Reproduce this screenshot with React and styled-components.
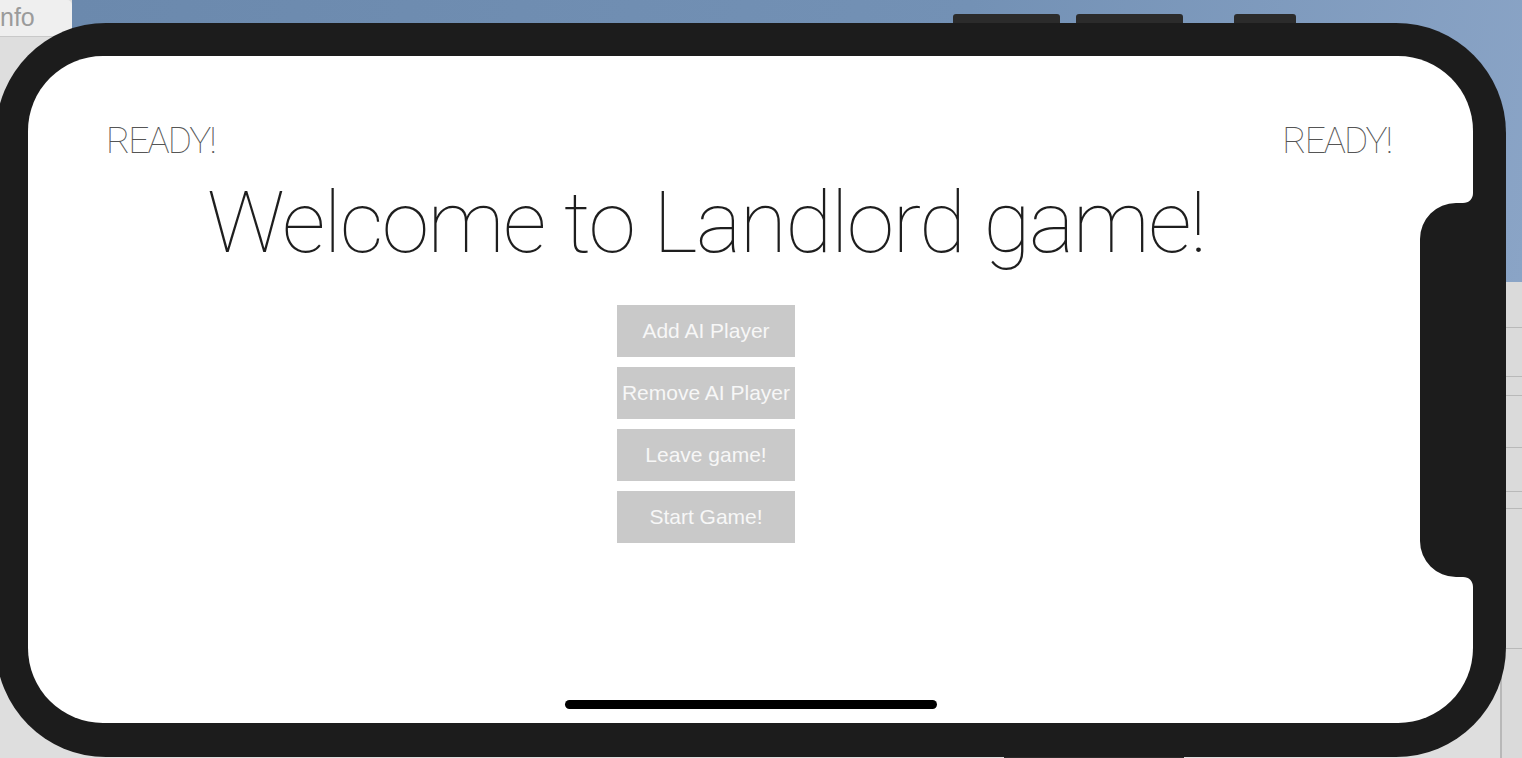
import React from "react";
import styled, { createGlobalStyle } from "styled-components";

const GlobalStyle = createGlobalStyle`
    html, body {
        margin: 0;
        padding: 0;
        overflow: hidden;
    }
    body {
        font-family: "Liberation Sans", Arial, sans-serif;
    }
`;

const Desktop = styled.div`
    position: relative;
    width: 1522px;
    height: 758px;
    overflow: hidden;
    background: #dedede;
`;

const Sky = styled.div`
    position: absolute;
    left: 72px;
    top: 0;
    right: 0;
    height: 282px;
    background: linear-gradient(100deg, #6b89ad 0%, #7391b5 60%, #8aa4c6 100%);
`;

const InfoTab = styled.div`
    position: absolute;
    left: 0;
    top: 0;
    width: 72px;
    height: 36px;
    background: #efefef;
    border-bottom: 1px solid #c9c9c9;
    border-top-right-radius: 5px;
    color: #9b9b9b;
    font-size: 25px;
    line-height: 34px;
    white-space: nowrap;
`;

const SideList = styled.div`
    position: absolute;
    left: 1500px;
    top: 282px;
    right: 0;
    bottom: 0;
    display: flex;
    flex-direction: column;
    background: #dadada;
    border-left: 2px solid #b8b8b8;
`;

const SideRow = styled.div`
    height: ${(p) => p.h}px;
    flex-shrink: 0;
    border-bottom: 1px solid #b9b9b9;
`;

const SideButton = styled.div`
    position: absolute;
    top: 14px;
    left: ${(p) => p.x}px;
    width: ${(p) => p.w}px;
    height: 14px;
    background: #2b2b2b;
    border-radius: 3px 3px 0 0;
`;

const BottomButton = styled.div`
    position: absolute;
    bottom: 0;
    left: 1004px;
    width: 180px;
    height: 4px;
    background: #2b2b2b;
`;

const Phone = styled.div`
    position: absolute;
    left: -4px;
    top: 23px;
    width: 1510px;
    height: 734px;
    box-sizing: border-box;
    padding: 33px 33px 34px 32px;
    background: #1c1c1c;
    border-radius: 110px;
    display: flex;
`;

const Screen = styled.div`
    position: relative;
    flex: 1;
    background: #ffffff;
    border-radius: 75px;
    overflow: hidden;
    display: flex;
    flex-direction: column;
`;

const Notch = styled.svg`
    position: absolute;
    right: 0;
    top: 137px;
`;

const StatusRow = styled.div`
    display: flex;
    justify-content: space-between;
    padding: 65px 82px 0 78px;
`;

const Ready = styled.div`
    font-family: Roboto, "Liberation Sans", sans-serif;
    font-weight: 100;
    font-size: 37px;
    line-height: 40px;
    letter-spacing: -1.9px;
    color: #555555;
`;

const Lobby = styled.div`
    display: flex;
    flex-direction: column;
    align-items: center;
    padding-right: 89px;
`;

const Title = styled.h1`
    margin: 7px 0 0;
    font-family: Roboto, "Liberation Sans", sans-serif;
    font-weight: 100;
    font-size: 86px;
    line-height: 110px;
    letter-spacing: -1.6px;
    color: #1e1e1e;
    white-space: nowrap;
`;

const Actions = styled.div`
    display: flex;
    flex-direction: column;
    gap: 10px;
    margin-top: 27px;
`;

const ActionButton = styled.button`
    width: 178px;
    height: 52px;
    border: none;
    padding: 0;
    background: #c9c9c9;
    color: #f7f7f7;
    font-family: "Liberation Sans", Arial, sans-serif;
    font-size: 21px;
    white-space: nowrap;
    cursor: pointer;
`;

const HomeIndicator = styled.div`
    margin: auto auto 14px;
    width: 372px;
    height: 9px;
    border-radius: 5px;
    background: #000000;
`;

const buttons = ["Add AI Player", "Remove AI Player", "Leave game!", "Start Game!"];
const sideRows = [45, 48, 18, 51, 43, 16, 139];

class App extends React.Component {
    render() {
        return (
            <Desktop>
                <GlobalStyle />
                <Sky />
                <InfoTab>nfo</InfoTab>
                <SideList>
                    {sideRows.map((h, i) => (
                        <SideRow key={i} h={h} />
                    ))}
                </SideList>
                <SideButton x={953} w={107} />
                <SideButton x={1076} w={107} />
                <SideButton x={1234} w={62} />
                <BottomButton />
                <Phone>
                    <Screen>
                        <StatusRow>
                            <Ready>READY!</Ready>
                            <Ready>READY!</Ready>
                        </StatusRow>
                        <Lobby>
                            <Title>Welcome to Landlord game!</Title>
                            <Actions>
                                {buttons.map((label) => (
                                    <ActionButton key={label}>{label}</ActionButton>
                                ))}
                            </Actions>
                        </Lobby>
                        <HomeIndicator />
                        <Notch width="53" height="394" viewBox="0 0 53 394">
                            <path
                                d="M53 0 C53 6 49 10 43 10 L36 10 A36 36 0 0 0 0 46 L0 348 A36 36 0 0 0 36 384 L43 384 C49 384 53 388 53 394 Z"
                                fill="#1c1c1c"
                            />
                        </Notch>
                    </Screen>
                </Phone>
            </Desktop>
        );
    }
}

export default App;
